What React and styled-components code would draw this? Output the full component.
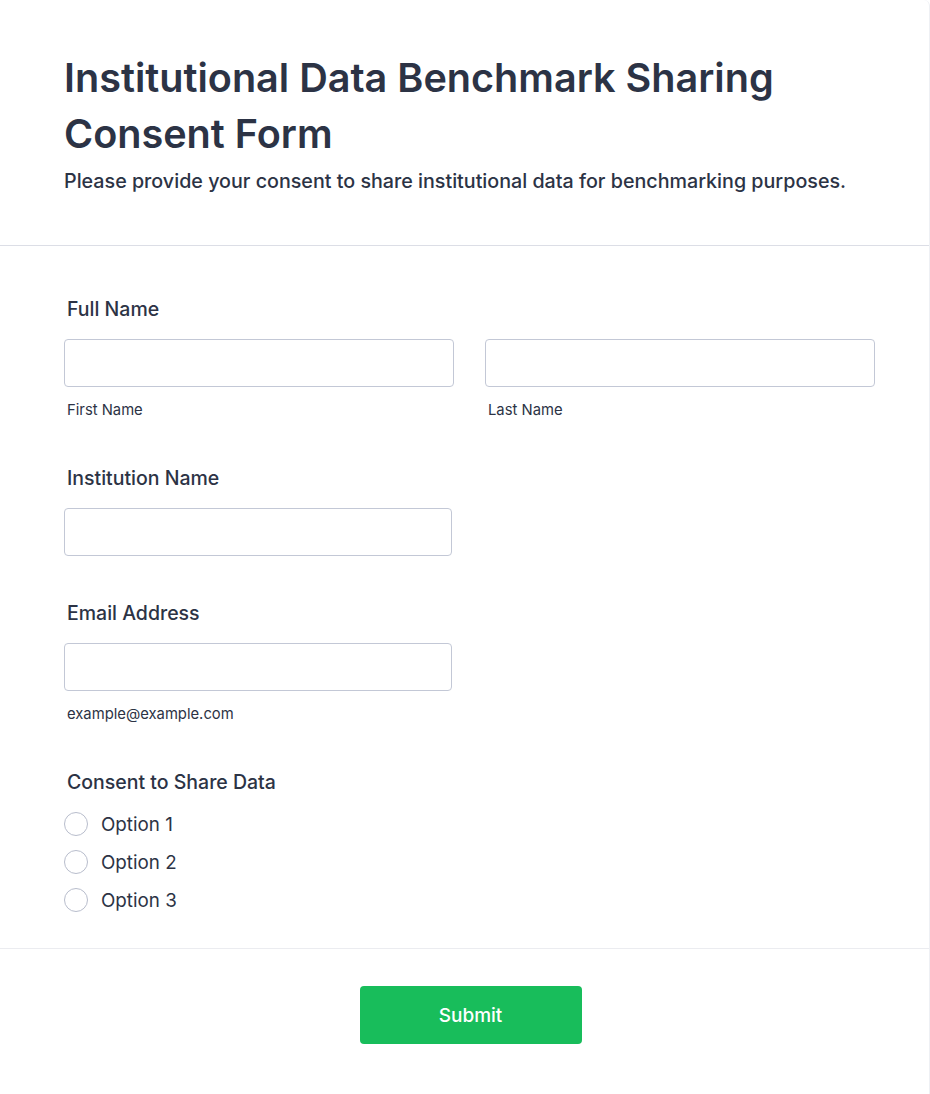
import React from "react";
import styled, { createGlobalStyle } from "styled-components";

const GlobalStyle = createGlobalStyle`
  * { box-sizing: border-box; }
  body {
    margin: 0;
    background: #ffffff;
    font-family: Inter, "Noto Sans", "Liberation Sans", sans-serif;
    color: #2c3345;
  }
`;

const Card = styled.div`
  width: 930px;
  min-height: 1094px;
  background: #fff;
  border-right: 1px solid #eef0f4;
  border-top-right-radius: 6px;
`;

const Header = styled.header`
  padding: 50px 54px 50px 64px;
  border-bottom: 1px solid #dcdee6;
`;

const Title = styled.h1`
  margin: 0;
  font-size: 39.6px;
  line-height: 56px;
  font-weight: 600;
  color: #2c3345;
  letter-spacing: 0;
`;

const Subtitle = styled.p`
  margin: 6px 0 0;
  font-size: 19.7px;
  line-height: 27px;
  font-weight: 500;
  color: #2c3345;
`;

const Body = styled.div`
  padding: 50px 54px 36px 64px;
  display: flex;
  flex-direction: column;
  gap: 44px;
  border-bottom: 1px solid #ebecf0;
`;

const Field = styled.div`
  display: flex;
  flex-direction: column;
`;

const Label = styled.label`
  font-size: 19.5px;
  line-height: 27px;
  font-weight: 500;
  padding-left: 3px;
  margin-bottom: 16px;
`;

const Row = styled.div`
  display: flex;
  gap: 31px;
`;

const Column = styled.div`
  display: flex;
  flex-direction: column;
  flex-shrink: 0;
  width: ${(p) => p.$w}px;
`;

const Input = styled.input`
  width: 100%;
  height: 48px;
  border: 1px solid #c3c8d6;
  border-radius: 4px;
  background: #fff;
  font: inherit;
  padding: 0 12px;
  outline: none;
`;

const SubLabel = styled.span`
  margin-top: 13px;
  padding-left: 3px;
  font-size: 14.8px;
  line-height: 21px;
  color: #2c3345;
`;

const Options = styled.div`
  display: flex;
  flex-direction: column;
  gap: 14px;
`;

const Option = styled.label`
  display: flex;
  align-items: center;
  gap: 13px;
  height: 24px;
  font-size: 18.8px;
  color: #2c3345;
`;

const Radio = styled.span`
  width: 24px;
  height: 24px;
  border-radius: 50%;
  border: 1px solid #b8bdcc;
  background: #fff;
  flex-shrink: 0;
`;

const Footer = styled.div`
  display: flex;
  justify-content: center;
  padding: 37px 0 50px 12px;
`;

const SubmitButton = styled.button`
  width: 222px;
  height: 58px;
  border: none;
  border-radius: 4px;
  background: #18bd5b;
  color: #fff;
  font-family: inherit;
  font-size: 19px;
  font-weight: 500;
  cursor: pointer;
`;

export default function App() {
  return (
    <>
      <GlobalStyle />
      <Card>
        <Header>
          <Title>Institutional Data Benchmark Sharing Consent Form</Title>
          <Subtitle>
            Please provide your consent to share institutional data for
            benchmarking purposes.
          </Subtitle>
        </Header>
        <Body>
          <Field>
            <Label>Full Name</Label>
            <Row>
              <Column $w={390}>
                <Input />
                <SubLabel>First Name</SubLabel>
              </Column>
              <Column $w={390}>
                <Input />
                <SubLabel>Last Name</SubLabel>
              </Column>
            </Row>
          </Field>
          <Field>
            <Label>Institution Name</Label>
            <Column $w={388}>
              <Input />
            </Column>
          </Field>
          <Field>
            <Label>Email Address</Label>
            <Column $w={388}>
              <Input type="email" />
              <SubLabel>example@example.com</SubLabel>
            </Column>
          </Field>
          <Field>
            <Label>Consent to Share Data</Label>
            <Options>
              {["Option 1", "Option 2", "Option 3"].map((o) => (
                <Option key={o}>
                  <Radio />
                  {o}
                </Option>
              ))}
            </Options>
          </Field>
        </Body>
        <Footer>
          <SubmitButton>Submit</SubmitButton>
        </Footer>
      </Card>
    </>
  );
}
